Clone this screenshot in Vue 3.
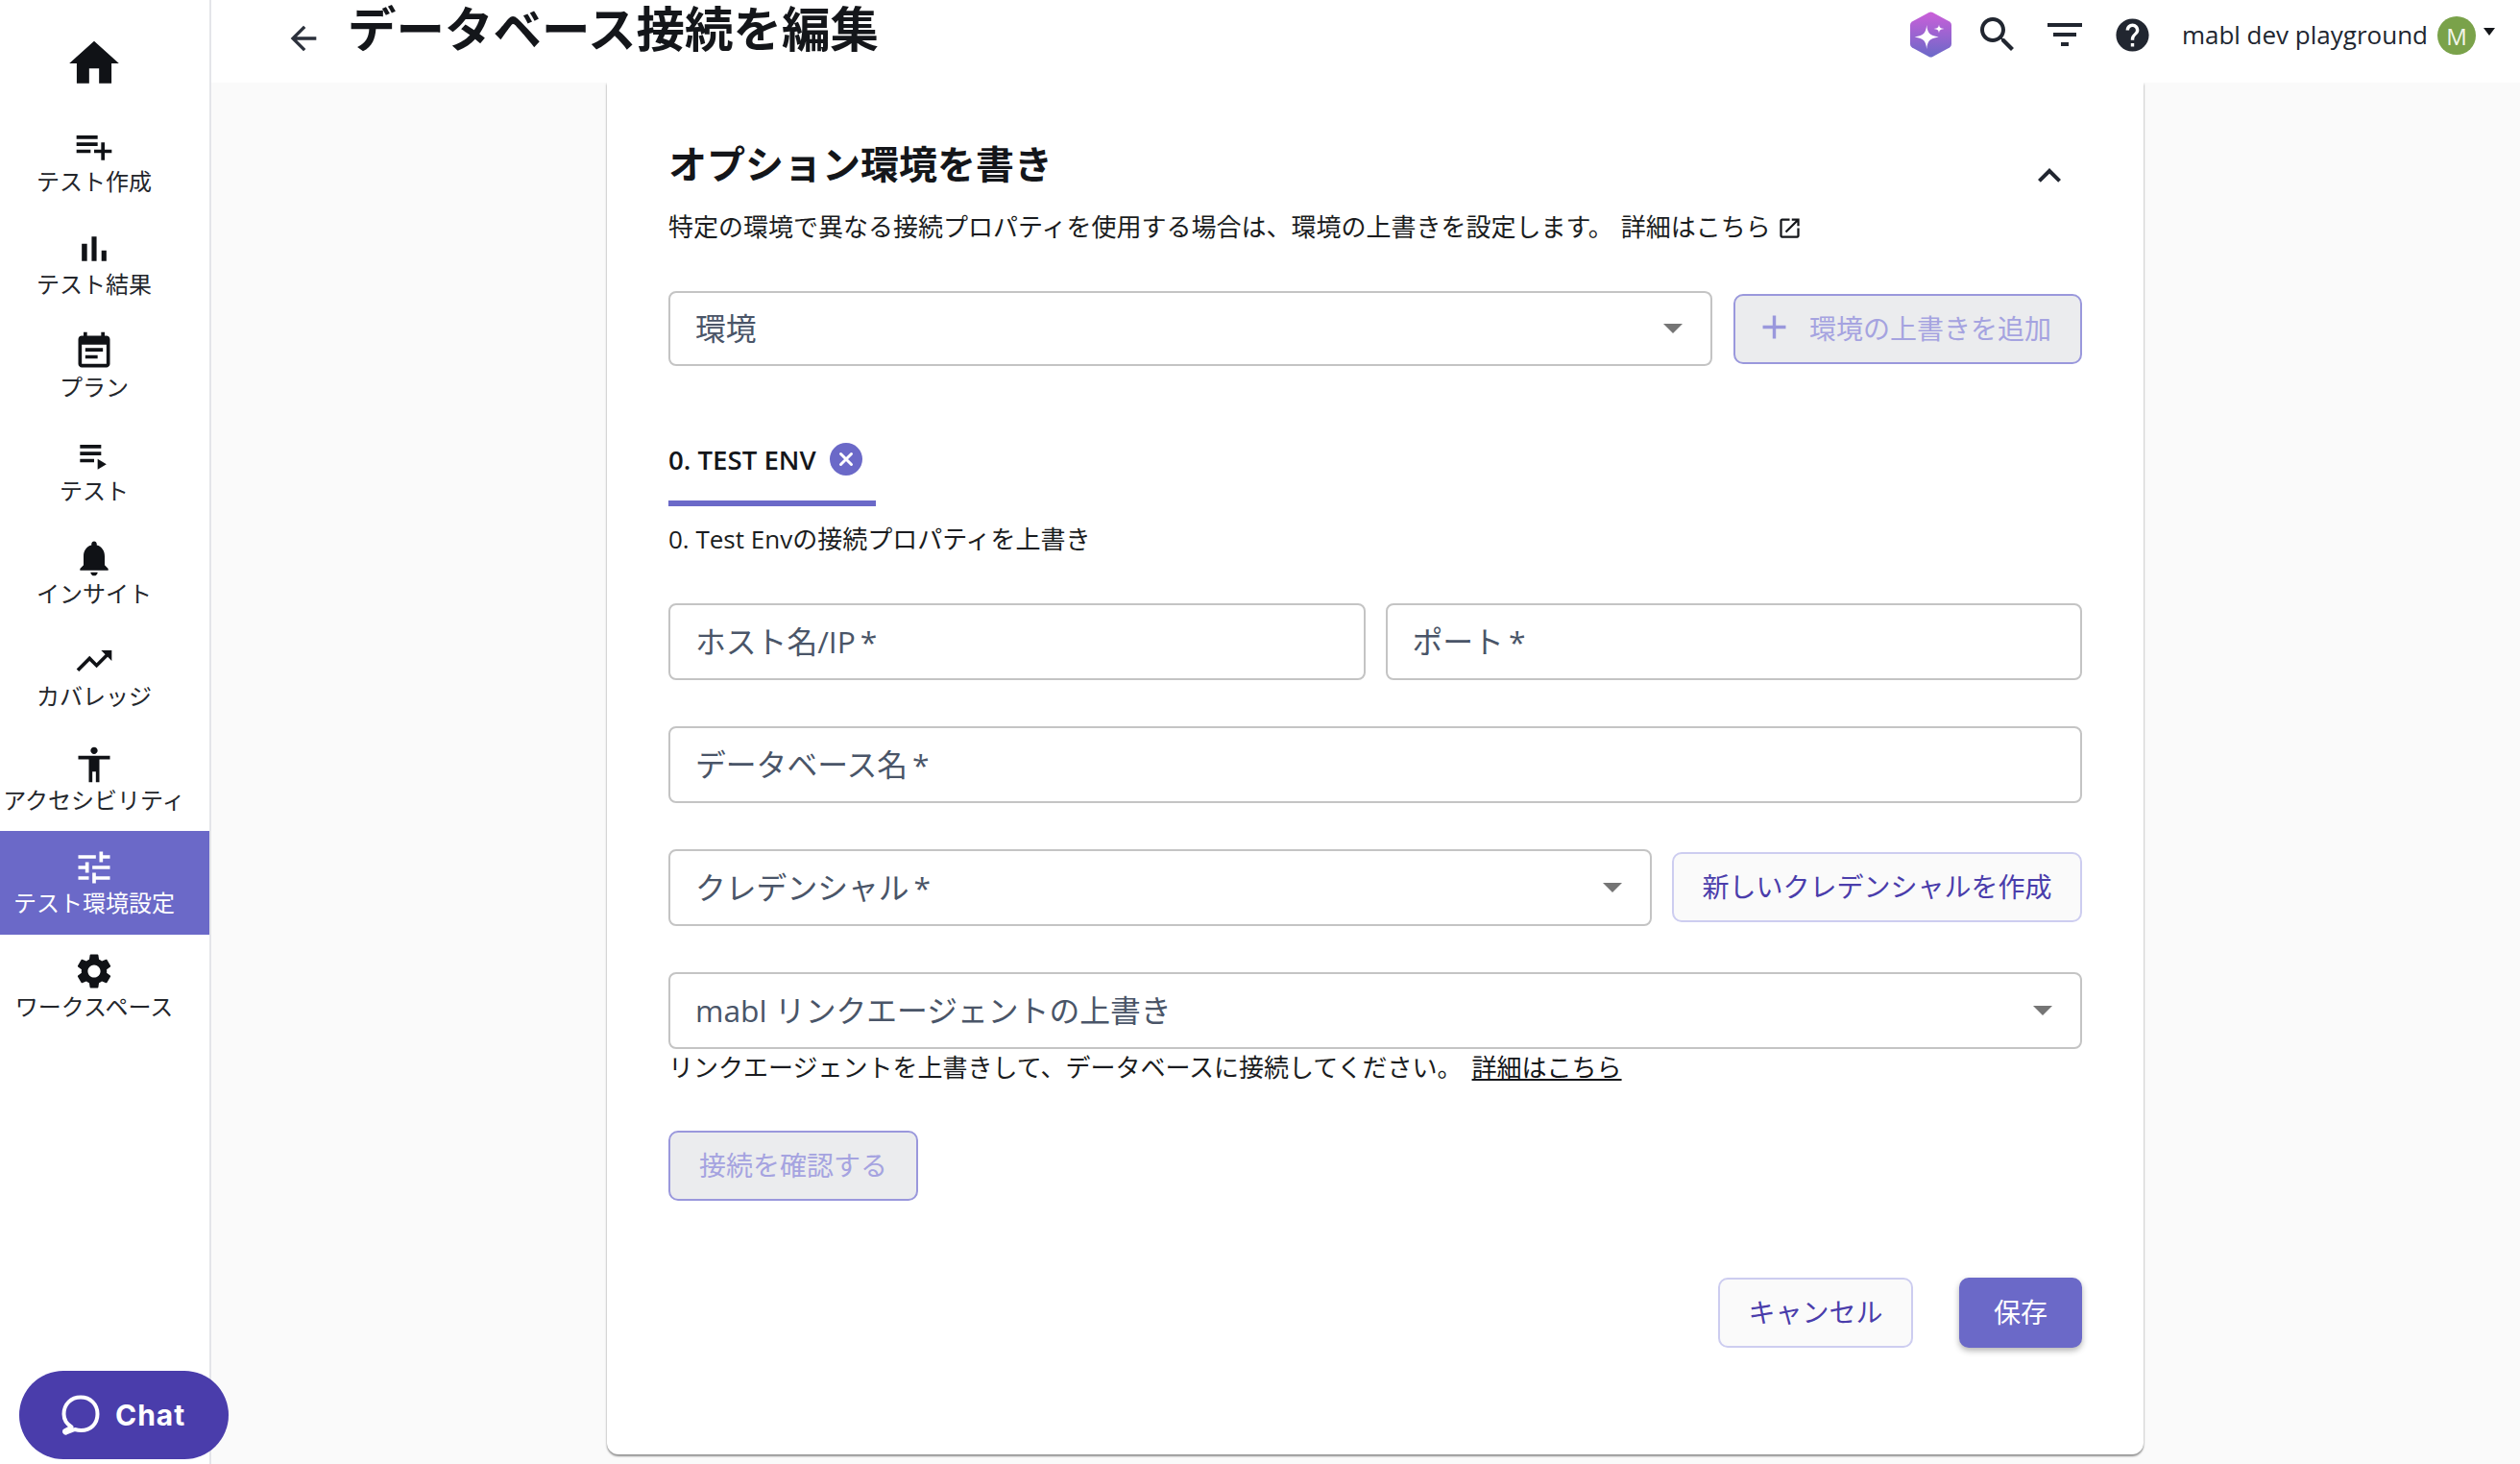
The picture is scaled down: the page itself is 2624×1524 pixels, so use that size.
<script setup>
const navItems = [
  { label: 'テスト作成', d: 'M14 10H2v2h12v-2zm0-4H2v2h12V6zm4 8v-4h-2v4h-4v2h4v4h2v-4h4v-2h-4zM2 16h8v-2H2v2z' },
  { label: 'テスト結果', d: 'M5 9.2h3V19H5zM10.6 5h2.8v14h-2.8zm5.6 8H19v6h-2.8z' },
  { label: 'プラン', d: 'M17 10H7v2h10v-2zm2-7h-1V1h-2v2H8V1H6v2H5c-1.11 0-1.99.9-1.99 2L3 19c0 1.1.89 2 2 2h14c1.1 0 2-.9 2-2V5c0-1.1-.9-2-2-2zm0 16H5V8h14v11zm-5-5H7v2h7v-2z' },
  { label: 'テスト', d: 'M4 10h12v2H4zm0-4h12v2H4zm0 8h8v2H4zm10 0v6l5-3z' },
  { label: 'インサイト', d: 'M12 22c1.1 0 2-.9 2-2h-4c0 1.1.89 2 2 2zm6-6v-5c0-3.07-1.64-5.64-4.5-6.32V4c0-.83-.67-1.5-1.5-1.5s-1.5.67-1.5 1.5v.68C7.63 5.36 6 7.92 6 11v5l-2 2v1h16v-1l-2-2z' },
  { label: 'カバレッジ', d: 'M16 6l2.29 2.29-4.88 4.88-4-4L2 16.59 3.41 18l6-6 4 4 6.3-6.29L22 12V6z' },
  { label: 'アクセシビリティ', d: 'M12 2c1.1 0 2 .9 2 2s-.9 2-2 2-2-.9-2-2 .9-2 2-2zm9 7h-6v13h-2v-6h-2v6H9V9H3V7h18v2z' },
  { label: 'テスト環境設定', active: true, d: 'M3 17v2h6v-2H3zM3 5v2h10V5H3zm10 16v-2h8v-2h-8v-2h-2v6h2zM7 9v2H3v2h4v2h2V9H7zm14 4v-2H11v2h10zm-6-4h2V7h4V5h-4V3h-2v6z' },
  { label: 'ワークスペース', d: 'M19.14 12.94c.04-.3.06-.61.06-.94 0-.32-.02-.64-.07-.94l2.03-1.58c.18-.14.23-.41.12-.61l-1.92-3.32c-.12-.22-.37-.29-.59-.22l-2.39.96c-.5-.38-1.03-.7-1.62-.94l-.36-2.54c-.04-.24-.24-.41-.48-.41h-3.84c-.24 0-.43.17-.47.41l-.36 2.54c-.59.24-1.13.57-1.62.94l-2.39-.96c-.22-.08-.47 0-.59.22L2.74 8.87c-.12.21-.08.47.12.61l2.03 1.58c-.05.3-.09.63-.09.94s.02.64.07.94l-2.03 1.58c-.18.14-.23.41-.12.61l1.92 3.32c.12.22.37.29.59.22l2.39-.96c.5.38 1.03.7 1.62.94l.36 2.54c.05.24.24.41.48.41h3.84c.24 0 .44-.17.47-.41l.36-2.54c.59-.24 1.13-.56 1.62-.94l2.39.96c.22.08.47 0 .59-.22l1.92-3.32c.12-.22.07-.47-.12-.61l-2.01-1.58zM12 15.6c-1.98 0-3.6-1.62-3.6-3.6s1.62-3.6 3.6-3.6 3.6 1.62 3.6 3.6-1.62 3.6-3.6 3.6z' }
]
</script>

<template>
  <div class="app">
    <aside class="sidebar">
      <div class="home">
        <svg class="home-icon" viewBox="0 0 24 24"><path d="M10 20v-6h4v6h5v-8h3L12 3 2 12h3v8z" /></svg>
      </div>
      <div v-for="item in navItems" :key="item.label" class="nav-item" :class="{ active: item.active }">
        <svg class="nav-icon" viewBox="0 0 24 24"><path :d="item.d" /></svg>
        <span class="nav-label">{{ item.label }}</span>
      </div>
    </aside>

    <div class="main">
      <header class="topbar">
        <svg class="back" viewBox="0 0 24 24"><path d="M20 11H7.83l5.59-5.59L12 4l-8 8 8 8 1.41-1.41L7.83 13H20v-2z" /></svg>
        <h1 class="title">データベース接続を編集</h1>
        <div class="tools">
          <svg class="hex" viewBox="0 0 43 48">
            <defs>
              <linearGradient id="hexg" x1="0" y1="0" x2="0" y2="1">
                <stop offset="0" stop-color="#cb5fd9" />
                <stop offset="1" stop-color="#6b69c8" />
              </linearGradient>
            </defs>
            <path d="M19.5 1 L2 10.5 Q0 11.6 0 14 V34 Q0 36.4 2 37.5 L19.5 47 Q21.5 48 23.5 47 L41 37.5 Q43 36.4 43 34 V14 Q43 11.6 41 10.5 L23.5 1 Q21.5 0 19.5 1 Z" fill="url(#hexg)" />
            <path d="M17.2 14 C18 22 20 25 29.7 26.5 C20 28 18 31 17.2 39 C16.4 31 14.4 28 4.7 26.5 C14.4 25 16.4 22 17.2 14 Z" fill="#fff" />
            <path d="M30 13.5 C30.4 16.5 31.5 17.6 35.5 18 C31.5 18.4 30.4 19.5 30 22.5 C29.6 19.5 28.5 18.4 24.5 18 C28.5 17.6 29.6 16.5 30 13.5 Z" fill="#fff" />
          </svg>
          <svg class="tool search" viewBox="0 0 24 24"><path d="M15.5 14h-.79l-.28-.27C15.41 12.59 16 11.11 16 9.5 16 5.91 13.09 3 9.5 3S3 5.91 3 9.5 5.91 16 9.5 16c1.61 0 3.09-.59 4.23-1.57l.27.28v.79l5 4.99L20.49 19l-4.99-5zm-6 0C7.01 14 5 11.99 5 9.5S7.01 5 9.5 5 14 7.01 14 9.5 11.99 14 9.5 14z" /></svg>
          <svg class="tool filter" viewBox="0 0 24 24"><path d="M10 18h4v-2h-4v2zM3 6v2h18V6H3zm3 7h12v-2H6v2z" /></svg>
          <svg class="tool help" viewBox="0 0 24 24"><path d="M12 2C6.48 2 2 6.48 2 12s4.48 10 10 10 10-4.48 10-10S17.52 2 12 2zm1 17h-2v-2h2v2zm2.07-7.75l-.9.92C13.45 12.9 13 13.5 13 15h-2v-.5c0-1.1.45-2.1 1.17-2.83l1.24-1.26c.37-.36.59-.86.59-1.41 0-1.1-.9-2-2-2s-2 .9-2 2H8c0-2.21 1.79-4 4-4s4 1.79 4 4c0 .88-.36 1.68-.93 2.25z" /></svg>
          <span class="org">mabl dev playground</span>
          <span class="avatar">M</span>
          <span class="caret"></span>
        </div>
      </header>

      <div class="content">
        <section class="card">
          <div class="heading-row">
            <h2 class="heading">オプション環境を書き</h2>
            <svg class="chevron" viewBox="0 0 24 24"><path d="M12 8l-6 6 1.41 1.41L12 10.83l4.59 4.58L18 14z" /></svg>
          </div>
          <p class="desc">
            <span>特定の環境で異なる接続プロパティを使用する場合は、環境の上書きを設定します。</span>
            <span class="desc-link">詳細はこちら</span>
            <svg class="ext" viewBox="0 0 24 24"><path d="M19 19H5V5h7V3H5c-1.11 0-2 .9-2 2v14c0 1.1.89 2 2 2h14c1.1 0 2-.9 2-2v-7h-2v7zM14 3v2h3.59l-9.83 9.83 1.41 1.41L19 6.41V10h2V3h-7z" /></svg>
          </p>

          <div class="row env-row">
            <div class="field select grow"><span class="val">環境</span><i class="arrow"></i></div>
            <button class="btn disabled add">
              <svg class="plus" viewBox="0 0 24 24"><path d="M19 13h-6v6h-2v-6H5v-2h6V5h2v6h6v2z" /></svg>
              環境の上書きを追加
            </button>
          </div>

          <div class="tab">
            <span class="tab-text">0. TEST ENV</span>
            <svg class="tab-x" viewBox="0 0 34 34">
              <circle cx="17" cy="17" r="17" fill="#6b69c8" />
              <path d="M11.5 11.5l11 11M22.5 11.5l-11 11" stroke="#fff" stroke-width="3" stroke-linecap="round" />
            </svg>
          </div>
          <p class="override">0. Test Envの接続プロパティを上書き</p>

          <div class="row first">
            <div class="field grow"><span class="val">ホスト名/IP<b class="req">*</b></span></div>
            <div class="field grow"><span class="val">ポート<b class="req">*</b></span></div>
          </div>
          <div class="row next">
            <div class="field grow"><span class="val">データベース名<b class="req">*</b></span></div>
          </div>
          <div class="row next">
            <div class="field select grow"><span class="val">クレデンシャル<b class="req">*</b></span><i class="arrow"></i></div>
            <button class="btn outline create">新しいクレデンシャルを作成</button>
          </div>
          <div class="row next">
            <div class="field select grow"><span class="val">mabl リンクエージェントの上書き</span><i class="arrow"></i></div>
          </div>
          <p class="helper">
            <span>リンクエージェントを上書きして、データベースに接続してください。</span>
            <a class="helper-link">詳細はこちら</a>
          </p>
          <button class="btn disabled verify">接続を確認する</button>
          <div class="footer">
            <button class="btn outline cancel">キャンセル</button>
            <button class="btn primary save">保存</button>
          </div>
        </section>
      </div>
    </div>

    <div class="chat">
      <svg class="chat-icon" viewBox="0 0 40 42" fill="none">
        <path d="M10.5 33.5 C5 30 2.5 25 2.5 20 C2.5 9.5 10 2.5 20 2.5 C30 2.5 37.5 9.5 37.5 20 C37.5 30.5 30 37 20.5 37 C18 37 16 36.6 14 36 L5 39.5 C3.5 40 2.5 38.3 3.5 37.2 Z" stroke="#fff" stroke-width="4" stroke-linejoin="round" />
      </svg>
      <span class="chat-text">Chat</span>
    </div>
  </div>
</template>

<style>
html, body { margin: 0; padding: 0; background: #fff; overflow: hidden; }
</style>

<style scoped>
* { box-sizing: border-box; }
.app {
  position: relative;
  display: flex;
  width: 2624px;
  height: 1524px;
  overflow: hidden;
  font-family: "Open Sans", "Noto Sans CJK JP", sans-serif;
  color: #14161a;
}

/* Sidebar */
.sidebar {
  width: 220px;
  flex: none;
  background: #fff;
  border-right: 2px solid #e4e5e9;
  display: flex;
  flex-direction: column;
}
.home {
  height: 113.5px;
  padding-top: 35px;
  padding-right: 22px;
  display: flex;
  justify-content: center;
}
.home-icon { width: 62px; height: 62px; fill: #101216; }
.nav-item {
  height: 107.4px;
  flex: none;
  display: flex;
  flex-direction: column;
  align-items: center;
  padding-top: 16px;
  padding-right: 22px;
  color: #23262b;
}
.nav-icon { width: 44px; height: 44px; fill: #101216; flex: none; }
.nav-label { font-size: 24px; line-height: 32px; margin-top: -1px; white-space: nowrap; font-weight: 400; }
.nav-item.active { background: #6b69c8; color: #fff; }
.nav-item.active .nav-icon { fill: #fff; }

/* Main */
.main { flex: 1; min-width: 0; display: flex; flex-direction: column; }
.topbar {
  position: relative;
  z-index: 1;
  height: 86px;
  flex: none;
  background: #fff;
  padding-left: 76px;
  display: flex;
  align-items: flex-start;
}
.back { width: 40px; height: 40px; margin-top: 20px; fill: #2b303b; flex: none; }
.title {
  margin: 0 0 0 26px;
  font-size: 50.5px;
  line-height: 60px;
  font-weight: 700;
  color: #14161a;
  white-space: nowrap;
}
.tools {
  margin-left: auto;
  height: 72px;
  display: flex;
  align-items: center;
  padding-right: 26px;
}
.hex { width: 43px; height: 48px; margin-right: 24px; }
.tool { fill: #212630; flex: none; }
.search { width: 48px; height: 48px; margin-right: 22px; }
.filter { width: 48px; height: 48px; margin-right: 26px; }
.help { width: 41px; height: 41px; margin-right: 31px; }
.org { font-size: 26px; line-height: 40px; color: #212630; white-space: nowrap; }
.avatar {
  width: 40px;
  height: 40px;
  border-radius: 50%;
  margin-left: 10px;
  margin-top: 2px;
  background: #7aa24a;
  color: #f2f6ea;
  font-size: 24px;
  display: flex;
  align-items: center;
  justify-content: center;
}
.caret {
  width: 0;
  height: 0;
  margin-left: 8px;
  margin-top: -6px;
  border-left: 6.5px solid transparent;
  border-right: 6.5px solid transparent;
  border-top: 8px solid #14161a;
}

.content {
  flex: 1;
  background: #fafafa;
  padding-left: 412px;
}
.card {
  width: 1600px;
  height: 1428px;
  background: #fff;
  border-radius: 0 0 12px 12px;
  padding: 55px 64px 0;
  box-shadow: 0 2px 2px rgba(0, 0, 0, 0.4), 0 0 3px rgba(0, 0, 0, 0.12);
  display: flex;
  flex-direction: column;
}
.heading-row { height: 60px; display: flex; justify-content: space-between; align-items: flex-start; flex: none; }
.heading { margin: 0; font-size: 40px; line-height: 60px; font-weight: 700; color: #14161a; white-space: nowrap; }
.chevron { width: 48px; height: 48px; margin: 18px 10px 0 0; fill: #212630; flex: none; }
.desc {
  margin: 15px 0 0;
  height: 40px;
  display: flex;
  align-items: center;
  font-size: 26px;
  line-height: 40px;
  white-space: nowrap;
  color: #1a1c20;
}
.desc-link { margin-left: 8px; }
.ext { width: 27px; height: 27px; margin-left: 6px; margin-top: 2px; fill: #14161a; flex: none; }

.row { display: flex; align-items: center; gap: 21px; height: 80px; flex: none; }
.env-row { margin-top: 47px; gap: 22px; height: 78px; }
.env-row .field { height: 78px; }
.first { margin-top: 47px; }
.next { margin-top: 48px; }
.grow { flex: 1; min-width: 0; }
.field {
  height: 80px;
  border: 2px solid #c4c4c4;
  border-radius: 8px;
  background: #fff;
  padding: 0 26px;
  display: flex;
  align-items: center;
  justify-content: space-between;
  font-size: 31.8px;
  color: #4a5568;
  white-space: nowrap;
}
.val { padding-bottom: 4px; }
.req { font-weight: 400; margin-left: 5px; }
.arrow {
  width: 0;
  height: 0;
  border-left: 10px solid transparent;
  border-right: 10px solid transparent;
  border-top: 10px solid #757575;
  margin-right: 3px;
}

.btn {
  height: 73px;
  border-radius: 10px;
  font-family: inherit;
  font-size: 28px;
  white-space: nowrap;
  padding: 0 0 3px;
  display: flex;
  align-items: center;
  justify-content: center;
  flex: none;
}
.disabled { background: #ebecee; border: 2px solid #9a98dc; color: #a5a3e0; }
.outline { background: #fafafa; border: 2px solid #cdcdf0; color: #4a3dab; }
.primary { background: #6b69c8; border: none; color: #fff; box-shadow: 0 3px 6px rgba(0, 0, 0, 0.3); }
.add { width: 363px; gap: 16px; padding-right: 10px; }
.plus { width: 41px; height: 41px; fill: #9a98dc; flex: none; }
.create { width: 427px; align-self: flex-start; margin-top: 3px; }
.verify { width: 260px; margin-top: 47px; }
.cancel { width: 203px; }
.save { width: 128px; }

.tab {
  width: 216px;
  height: 80px;
  margin-top: 66px;
  padding-bottom: 12px;
  border-bottom: 6px solid #6b69c8;
  display: flex;
  align-items: center;
  gap: 14px;
  flex: none;
}
.tab-text { font-size: 27.6px; font-weight: 600; color: #14161a; white-space: nowrap; }
.tab-x { width: 34px; height: 34px; flex: none; }
.override { margin: 14px 0 0; font-size: 26px; line-height: 40px; color: #1a1c20; white-space: nowrap; }

.helper {
  margin: 0;
  height: 38px;
  font-size: 26px;
  line-height: 38px;
  display: flex;
  white-space: nowrap;
  color: #1a1c20;
}
.helper-link { margin-left: 10px; text-decoration: underline; color: #14161a; }

.footer { margin-top: 80px; display: flex; justify-content: flex-end; gap: 48px; flex: none; }

.chat {
  position: absolute;
  left: 20px;
  top: 1427px;
  width: 218px;
  height: 92px;
  border-radius: 46px;
  background: #4a3dab;
  display: flex;
  align-items: center;
  padding-left: 44px;
  gap: 16px;
}
.chat-icon { width: 40px; height: 42px; flex: none; }
.chat-text { font-family: Inter, "Liberation Sans", sans-serif; font-size: 30px; font-weight: 700; color: #fff; letter-spacing: 1px; }
</style>
